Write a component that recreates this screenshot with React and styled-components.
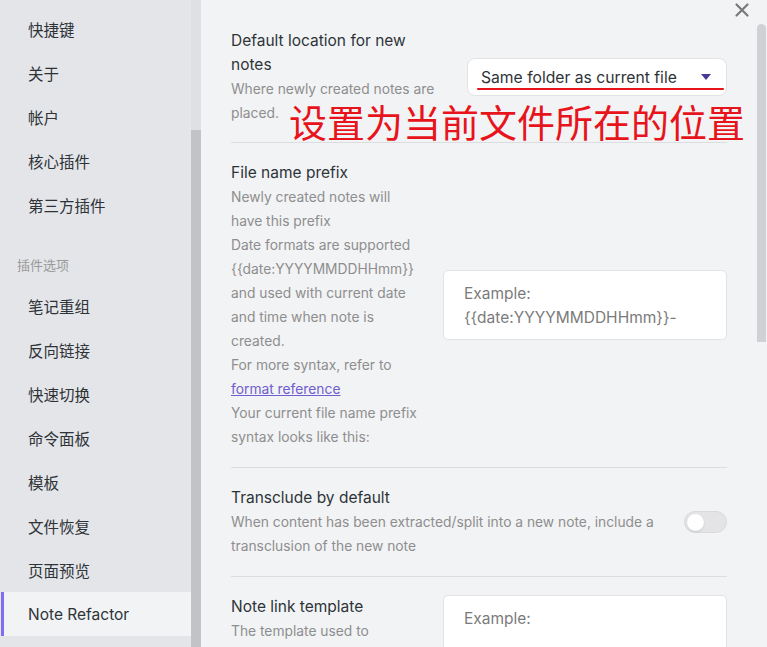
import React from "react";
import styled, { createGlobalStyle } from "styled-components";

const GlobalStyle = createGlobalStyle`
  html, body {
    margin: 0;
    padding: 0;
    background: #f2f3f5;
  }
  body {
    font-family: Inter, "Noto Sans CJK SC", sans-serif;
    -webkit-font-smoothing: antialiased;
  }
`;

const navTop = ["快捷键", "关于", "帐户", "核心插件", "第三方插件"];
const navPlugins = [
  "笔记重组",
  "反向链接",
  "快速切换",
  "命令面板",
  "模板",
  "文件恢复",
  "页面预览",
  "Note Refactor",
];

export default function App() {
  return (
    <>
      <GlobalStyle />
      <Window>
        <Sidebar>
          <NavList>
            {navTop.map(label => (
              <NavItem key={label}>{label}</NavItem>
            ))}
            <NavHeading>插件选项</NavHeading>
            {navPlugins.map(label => (
              <NavItem key={label} active={label === "Note Refactor"}>
                {label}
              </NavItem>
            ))}
          </NavList>
          <ScrollTrack shade="#dfe0e3">
            <ScrollThumb top={130} height={520} color="#c2c3c6" />
          </ScrollTrack>
        </Sidebar>

        <Content>
          <Settings>
            <SettingItem first>
              <Info>
                <Name>Default location for new notes</Name>
                <Description>Where newly created notes are placed.</Description>
              </Info>
              <Control width={260} offset={29}>
                <Dropdown>
                  <span>Same folder as current file</span>
                  <Caret />
                </Dropdown>
                <RedUnderline />
              </Control>
              <Annotation>设置为当前文件所在的位置</Annotation>
            </SettingItem>

            <SettingItem>
              <Info>
                <Name>File name prefix</Name>
                <Description>
                  Newly created notes will have this prefix
                  <br />
                  Date formats are supported {"{{date:YYYYMMDDHHmm}}"} and used
                  with current date and time when note is created.
                  <br />
                  For more syntax, refer to <DocLink>format reference</DocLink>
                  <br />
                  Your current file name prefix syntax looks like this:
                </Description>
              </Info>
              <Control width={284} centered>
                <TextBox height={70}>
                  Example:
                  <br />
                  {"{{date:YYYYMMDDHHmm}}-"}
                </TextBox>
              </Control>
            </SettingItem>

            <SettingItem>
              <Info>
                <Name>Transclude by default</Name>
                <Description>
                  When content has been extracted/split into a new note, include a
                  transclusion of the new note
                </Description>
              </Info>
              <Control width={43} centered>
                <Toggle>
                  <Knob />
                </Toggle>
              </Control>
            </SettingItem>

            <SettingItem>
              <Info>
                <Name>Note link template</Name>
                <Description>The template used to</Description>
              </Info>
              <Control width={284} offset={0}>
                <TextBox height={90}>Example:</TextBox>
              </Control>
            </SettingItem>
          </Settings>
          <CloseButton aria-label="close">
            <svg width="16" height="16" viewBox="0 0 16 16">
              <path
                d="M2.5 2.5 L13.5 13.5 M13.5 2.5 L2.5 13.5"
                stroke="#7a7a7a"
                strokeWidth="2.2"
                strokeLinecap="round"
              />
            </svg>
          </CloseButton>
        </Content>

        <ScrollTrack shade="#f2f3f5">
          <ScrollThumb top={24} height={318} color="#d0d1d4" rounded />
        </ScrollTrack>
      </Window>
    </>
  );
}

const Window = styled.div`
  display: flex;
  width: 767px;
  height: 647px;
  overflow: hidden;
  background: #f2f3f5;
`;

const Sidebar = styled.aside`
  display: flex;
  width: 201px;
  flex-shrink: 0;
  background: #e4e5e9;
`;

const NavList = styled.nav`
  flex: 1;
  display: flex;
  flex-direction: column;
  padding-top: 7px;
`;

const NavItem = styled.div`
  height: 44px;
  display: flex;
  align-items: center;
  padding-left: ${p => (p.active ? "24px" : "28px")};
  margin-left: ${p => (p.active ? "1px" : "0")};
  border-left: ${p => (p.active ? "3px solid #7f6df2" : "none")};
  background: ${p => (p.active ? "#f2f3f5" : "transparent")};
  font-size: 15.5px;
  color: #2e3338;
`;

const NavHeading = styled.div`
  padding: 28px 0 9px 17px;
  line-height: 20px;
  font-size: 13px;
  color: #999;
`;

const ScrollTrack = styled.div`
  width: 10px;
  flex-shrink: 0;
  background: ${p => p.shade};
`;

const ScrollThumb = styled.div`
  margin-top: ${p => p.top}px;
  height: ${p => p.height}px;
  width: ${p => (p.rounded ? "9px" : "10px")};
  background: ${p => p.color};
  border-radius: ${p => (p.rounded ? "5px 5px 0 0" : "0")};
`;

const Content = styled.main`
  position: relative;
  flex: 1;
  padding: 11px 30px 0 30px;
`;

const Settings = styled.div`
  display: flex;
  flex-direction: column;
`;

const SettingItem = styled.div`
  position: relative;
  display: flex;
  align-items: ${p => (p.first ? "flex-start" : "stretch")};
  gap: 20px;
  padding: ${p => (p.first ? "18px 0 17px" : "18px 0")};
  border-top: ${p => (p.first ? "none" : "1px solid #dcdde0")};
`;

const Info = styled.div`
  flex: 1;
  min-width: 0;
`;

const Name = styled.div`
  font-size: 15.5px;
  line-height: 24px;
  color: #2e3338;
`;

const Description = styled.div`
  font-size: 13.8px;
  line-height: 24px;
  color: #8e8e8e;
`;

const DocLink = styled.a`
  color: #705dcf;
  text-decoration: underline;
  cursor: pointer;
`;

const Control = styled.div`
  position: relative;
  width: ${p => p.width}px;
  flex-shrink: 0;
  display: flex;
  flex-direction: column;
  justify-content: ${p => (p.centered ? "center" : "flex-start")};
  padding-top: ${p => p.offset || 0}px;
`;

const Dropdown = styled.div`
  height: 38px;
  box-sizing: border-box;
  display: flex;
  align-items: center;
  justify-content: space-between;
  padding: 0 14px 0 13px;
  background: #fff;
  border: 1px solid #e3e3e6;
  border-radius: 8px;
  font-size: 15.7px;
  color: #2e3338;
`;

const Caret = styled.span`
  width: 0;
  height: 0;
  margin-right: 1px;
  border-left: 5px solid transparent;
  border-right: 5px solid transparent;
  border-top: 6px solid #483699;
`;

const RedUnderline = styled.div`
  position: absolute;
  left: 10px;
  right: 3px;
  top: 59px;
  height: 2px;
  border-radius: 1px;
  background: #e8141b;
`;

const Annotation = styled.div`
  position: absolute;
  left: 58px;
  top: 88px;
  font-family: "Noto Sans CJK SC", sans-serif;
  font-size: 38px;
  line-height: 44px;
  color: #e8141b;
  white-space: nowrap;
  pointer-events: none;
`;

const TextBox = styled.div`
  height: ${p => p.height}px;
  box-sizing: border-box;
  padding: 11px 20px;
  background: #fff;
  border: 1px solid #e3e3e6;
  border-radius: 5px;
  font-size: 15.5px;
  line-height: 24px;
  color: #7b7b7b;
`;

const Toggle = styled.div`
  width: 43px;
  height: 22px;
  box-sizing: border-box;
  border-radius: 11px;
  background: #e4e4e6;
  border: 1px solid #dadadd;
  display: flex;
  align-items: center;
  padding-left: 2px;
`;

const Knob = styled.div`
  width: 17px;
  height: 17px;
  border-radius: 50%;
  background: #fff;
  box-shadow: 0 1px 2px rgba(0, 0, 0, 0.12);
`;

const CloseButton = styled.button`
  position: absolute;
  top: 2px;
  right: 7px;
  width: 16px;
  height: 16px;
  padding: 0;
  border: none;
  background: none;
  display: flex;
`;
